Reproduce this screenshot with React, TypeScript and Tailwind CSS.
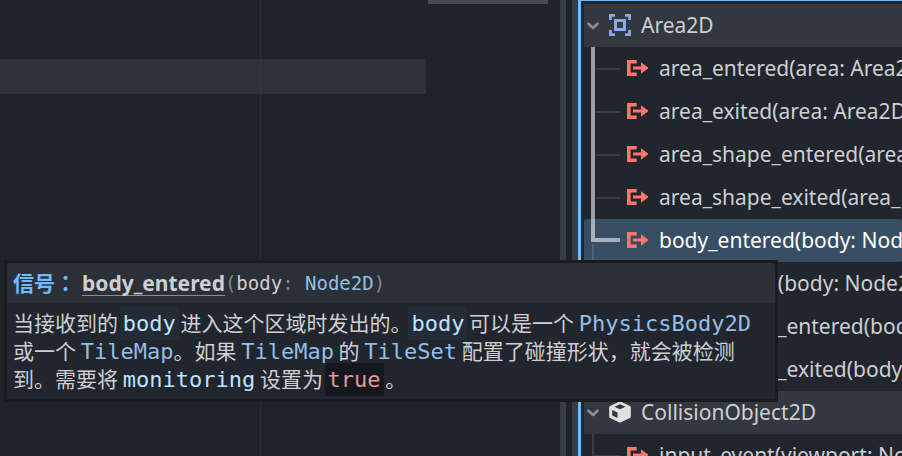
import React from "react";

const UI_FONT = "font-['Noto_Sans','Noto_Sans_CJK_SC',sans-serif]";

type Signal = { label: string; state: "path" | "selected" | "idle" };

const areaSignals: Signal[] = [
  { label: "area_entered(area: Area2D)", state: "path" },
  { label: "area_exited(area: Area2D)", state: "path" },
  { label: "area_shape_entered(area_rid: RID, area: Area2D)", state: "path" },
  { label: "area_shape_exited(area_rid: RID, area: Area2D)", state: "path" },
  { label: "body_entered(body: Node2D)", state: "selected" },
  { label: "body_exited(body: Node2D)", state: "idle" },
  { label: "body_shape_entered(body_rid: RID, body: Node2D)", state: "idle" },
  { label: "body_shape_exited(body_rid: RID, body: Node2D)", state: "idle" },
];

const collisionSignals: Signal[] = [
  { label: "input_event(viewport: Node, event: InputEvent)", state: "idle" },
];

function SignalIcon() {
  return (
    <svg viewBox="0 0 22 22" className="h-[22px] w-[22px] shrink-0" fill="#ff7668" aria-hidden="true">
      <path d="M1 3h9.700v3.400H4.600v9.200h6.100V19H1z" />
      <path d="M7 9.400h8V5.200l7.500 5.800-7.500 5.800v-4.200H7z" />
    </svg>
  );
}

function AreaIcon() {
  return (
    <svg viewBox="0 0 22 22" className="h-[22px] w-[22px] shrink-0" fill="#8da5f3" aria-hidden="true">
      <path d="M0 0h6v2.800H2.800V6H0zM16 0h6v6h-2.800V2.800H16zM0 16h2.800v3.200H6V22H0zM19.200 16H22v6h-6v-2.800h3.200z" />
      <path fillRule="evenodd" d="M5 5h12v12H5zM8 8v6h6V8z" />
    </svg>
  );
}

function CollisionIcon() {
  return (
    <svg viewBox="0 0 22 22" className="h-[22px] w-[22px] shrink-0" aria-hidden="true">
      <path
        fill="#e0e0e0"
        stroke="#e0e0e0"
        strokeLinejoin="round"
        d="M11 .8 21.300 5.700v10.600L11 21.200.7 16.300V5.700z"
      />
      <path fill="#32383f" d="M11 3.200l5.500 2.500L11 8.300 5.500 5.700zM3.200 9l5.300 2.500v5.400L3.200 14.500z" />
    </svg>
  );
}

function Chevron() {
  return (
    <svg viewBox="0 0 12 8" className="h-2 w-3 shrink-0" fill="none" stroke="#8b8e93" strokeWidth="2.600" strokeLinecap="round" strokeLinejoin="round" aria-hidden="true">
      <path d="M1.500 1.700 6 6l4.500-4.300" />
    </svg>
  );
}

function GroupRow({ icon, label }: { icon: React.ReactNode; label: string }) {
  return (
    <button type="button" className="flex h-[43px] w-full items-center bg-[#32383f] pl-[3px] text-left">
      <Chevron />
      <span className="ml-[10px] flex pb-px">{icon}</span>
      <span className="ml-[10px] pb-[2px]">{label}</span>
    </button>
  );
}

function Guide({ state }: { state: Signal["state"] }) {
  if (state === "path") {
    return (
      <span className="flex w-9 shrink-0 items-center self-stretch pl-[7px]">
        <span className="w-1 self-stretch bg-[#9c9ea2]" />
        <span className="ml-px h-[2px] flex-1 bg-[#393d45]" />
      </span>
    );
  }
  if (state === "selected") {
    return (
      <span className="flex w-9 shrink-0 flex-col self-stretch pl-[7px]">
        <span className="h-[23px] border-b-4 border-l-4 border-[#a7b0bb]" />
        <span className="ml-px mt-[2px] w-[2px] flex-1 bg-[#4d6277]" />
      </span>
    );
  }
  return (
    <span className="flex w-9 shrink-0 items-center self-stretch pl-2">
      <span className="w-[2px] self-stretch bg-[#393d45]" />
      <span className="h-[2px] flex-1 bg-[#393d45]" />
    </span>
  );
}

function SignalRow({ label, state }: Signal) {
  const tone = state === "selected" ? "rounded-[3px] bg-[#384e65] text-white" : "";
  return (
    <li>
      <button type="button" className={`flex h-[43px] w-full items-center text-left ${tone}`}>
        <Guide state={state} />
        <span className="ml-[6px] flex pb-px">
          <SignalIcon />
        </span>
        <span className="ml-[11px] pb-[2px]">{label}</span>
      </button>
    </li>
  );
}

function Mono({ children, className }: { children: React.ReactNode; className: string }) {
  return <code className={`font-['DejaVu_Sans_Mono',monospace] leading-none ${className}`}>{children}</code>;
}

function TypeLink({ name }: { name: string }) {
  return (
    <a href={`#${name}`} className="text-[#93bfe6]">
      <Mono className="text-[22px]">{name}</Mono>
    </a>
  );
}

function Param({ children }: { children: string }) {
  return <Mono className="-mx-[3px] bg-[#232b35] px-[3px] py-1 text-[22px] text-[#bfe1ff]">{children}</Mono>;
}

function HelpTooltip() {
  return (
    <div
      role="tooltip"
      className="absolute left-1 top-[260px] w-[774px] border-[3px] border-[#191b1e] bg-[#21252d] text-[21px] text-[#cdcfd2]"
    >
      <div className="flex h-10 items-center whitespace-pre rounded-t-[3px] bg-[#2b2f37] pl-[6px]">
        <b className="font-['Noto_Sans_CJK_JP',sans-serif] text-[#70bafa]">信号：</b>
        <a href="#body_entered" className="ml-[6px] border-b border-[#8b8d91] font-bold leading-[24px]">
          body_entered
        </a>
        <Mono className="text-[19px]">
          <span className="text-[#85888d]">(</span>body<span className="text-[#85888d]">: </span>
          <a href="#Node2D" className="text-[#93bfe6]">Node2D</a>
          <span className="text-[#85888d]">)</span>
        </Mono>
      </div>
      <p className="whitespace-nowrap pb-[7px] pl-[6px] pt-[5px] font-['Noto_Sans_CJK_SC',sans-serif] leading-[28px]">
        当接收到的 <Param>body</Param> 进入这个区域时发出的。<Param>body</Param> 可以是一个 <TypeLink name="PhysicsBody2D" />
        <br />
        或一个 <TypeLink name="TileMap" />。如果 <TypeLink name="TileMap" /> 的 <TypeLink name="TileSet" /> 配置了碰撞形状，就会被检测
        <br />
        到。需要将 <Mono className="text-[22px] text-[#bfe1ff]">monitoring</Mono> 设置为{" "}
        <Mono className="-mx-[3px] bg-[#14171e] px-[3px] py-1 text-[22px] text-[#e09a9d]">true</Mono> 。
      </p>
    </div>
  );
}

function CodeEditor() {
  return (
    <main className="flex min-w-0 flex-1 bg-[#1e222a]">
      <div className="flex min-w-0 flex-1 flex-col">
        <div className="flex h-[59px]">
          <span className="box-content w-[260px] border-r border-[#2a2d34]" />
        </div>
        <div className="flex h-[35px] bg-[#2d3139]">
          <span className="box-content w-[260px] border-r border-[#34383f]" />
        </div>
        <div className="flex flex-1">
          <span className="box-content w-[260px] border-r border-[#2a2d34]" />
        </div>
      </div>
      <div className="w-[134px] pl-[2px] pr-3">
        <div className="h-1 bg-[#47494f]" />
      </div>
    </main>
  );
}

export default function App() {
  return (
    <div className={`relative flex h-screen overflow-hidden bg-[#1e2227] ${UI_FONT}`}>
      <CodeEditor />
      <div className="w-[6px] bg-[#363d4a]" />
      <div className="w-[6px] bg-[#1f2328]" />
      <div className="w-[6px] bg-[#363d4a]" />
      <aside className="w-[324px] overflow-hidden whitespace-nowrap border-l-[3px] border-t border-[#70bafa] bg-[#21252e] pl-[3px] pt-[3px] text-[21px] leading-[28px] text-[#cdcfd2]">
        <GroupRow icon={<AreaIcon />} label="Area2D" />
        <ul>
          {areaSignals.map((s) => (
            <SignalRow key={s.label} {...s} />
          ))}
        </ul>
        <GroupRow icon={<CollisionIcon />} label="CollisionObject2D" />
        <ul>
          {collisionSignals.map((s) => (
            <SignalRow key={s.label} {...s} />
          ))}
        </ul>
      </aside>
      <HelpTooltip />
    </div>
  );
}
